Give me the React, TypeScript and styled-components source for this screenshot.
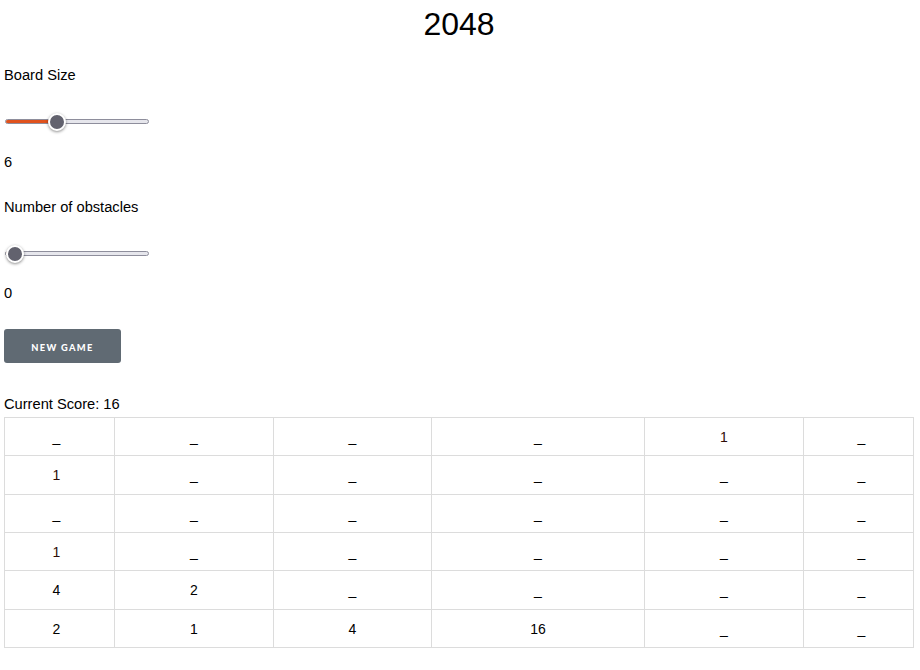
import React from "react";
import styled, { createGlobalStyle } from "styled-components";

const Global = createGlobalStyle`
  html, body { margin: 0; padding: 0; background: #fff; }
  body { font-family: "Liberation Sans", Arial, sans-serif; color: #000; }
`;

const Page = styled.div`
  width: 910px;
  margin-left: 4px;
  font-size: 14.667px;
  line-height: 16px;
`;

const Title = styled.h1`
  margin: 6px 0 0;
  font-size: 32px;
  font-weight: 400;
  line-height: 37px;
  text-align: center;
`;

const Label = styled.p<{ $top: number }>`
  margin: ${(p) => p.$top}px 0 0;
`;

const SliderBox = styled.div<{ $top: number }>`
  position: relative;
  width: 144px;
  height: 24px;
  margin-top: ${(p) => p.$top}px;
  margin-left: 1px;
  display: flex;
  align-items: center;
`;

const Track = styled.div`
  position: relative;
  width: 100%;
  height: 5px;
  box-sizing: border-box;
  border: 1px solid #8e8e9c;
  border-radius: 3px;
  background: #e6e6ec;
  overflow: hidden;
`;

const Fill = styled.div`
  position: absolute;
  left: 0;
  top: -1px;
  bottom: -1px;
  background: #e0521d;
`;

const Thumb = styled.div`
  position: absolute;
  top: 50%;
  width: 18px;
  height: 18px;
  margin-top: -8px;
  margin-left: -9px;
  box-sizing: border-box;
  border-radius: 50%;
  background: #62626e;
  border: 2px solid #fff;
  box-shadow: 0 1px 3px rgba(0, 0, 0, 0.45);
`;

const Button = styled.button`
  display: block;
  margin-top: 28px;
  width: 117px;
  height: 34px;
  border: none;
  border-radius: 3px;
  background: #606a73;
  color: #ffffff;
  font-family: Lato, "Open Sans", sans-serif;
  font-weight: 900;
  font-size: 9.3px;
  letter-spacing: 1.3px;
  text-transform: uppercase;
  padding: 3px 0 0;
`;

const Board = styled.table`
  margin-top: 5px;
  width: 910px;
  table-layout: fixed;
  border-collapse: collapse;
`;

const Cell = styled.td<{ $mark?: boolean }>`
  border: 1px solid #dcdcdc;
  text-align: center;
  padding: 11px 6px 10.33px;
  line-height: 16px;
  font-size: 14px;
  color: ${(p) => (p.$mark ? "#2e0c06" : "#000")};
  &:first-child { padding-left: 0; }
  &:last-child { padding-right: 0; }
`;

function Slider({ value, min, max, top }: { value: number; min: number; max: number; top: number }) {
  const f = (value - min) / (max - min);
  const center = 10 + f * 127;
  return (
    <SliderBox $top={top}>
      <Track>
        <Fill style={{ width: center }} />
      </Track>
      <Thumb style={{ left: center }} />
    </SliderBox>
  );
}

const board = [
  ["_", "_", "_", "_", "1*", "_"],
  ["1*", "_", "_", "_", "_", "_"],
  ["_", "_", "_", "_", "_", "_"],
  ["1*", "_", "_", "_", "_", "_"],
  ["4", "2", "_", "_", "_", "_"],
  ["2", "1", "4", "16", "_", "_"],
];

const widths = [110, 159, 158, 213, 159, 110];

export default function App() {
  return (
    <>
      <Global />
      <Page>
        <Title>2048</Title>
        <Label $top={24}>Board Size</Label>
        <Slider value={6} min={4} max={10} top={26} />
        <Label $top={21}>6</Label>
        <Label $top={29}>Number of obstacles</Label>
        <Slider value={0} min={0} max={10} top={26} />
        <Label $top={20}>0</Label>
        <Button>New Game</Button>
        <Label $top={33}>Current Score: 16</Label>
        <Board>
          <colgroup>
            {widths.map((w, i) => (
              <col key={i} style={{ width: w }} />
            ))}
          </colgroup>
          <tbody>
            {board.map((row, r) => (
              <tr key={r}>
                {row.map((v, c) => (
                  <Cell key={c} $mark={v.endsWith("*")}>
                    {v.replace("*", "")}
                  </Cell>
                ))}
              </tr>
            ))}
          </tbody>
        </Board>
      </Page>
    </>
  );
}
